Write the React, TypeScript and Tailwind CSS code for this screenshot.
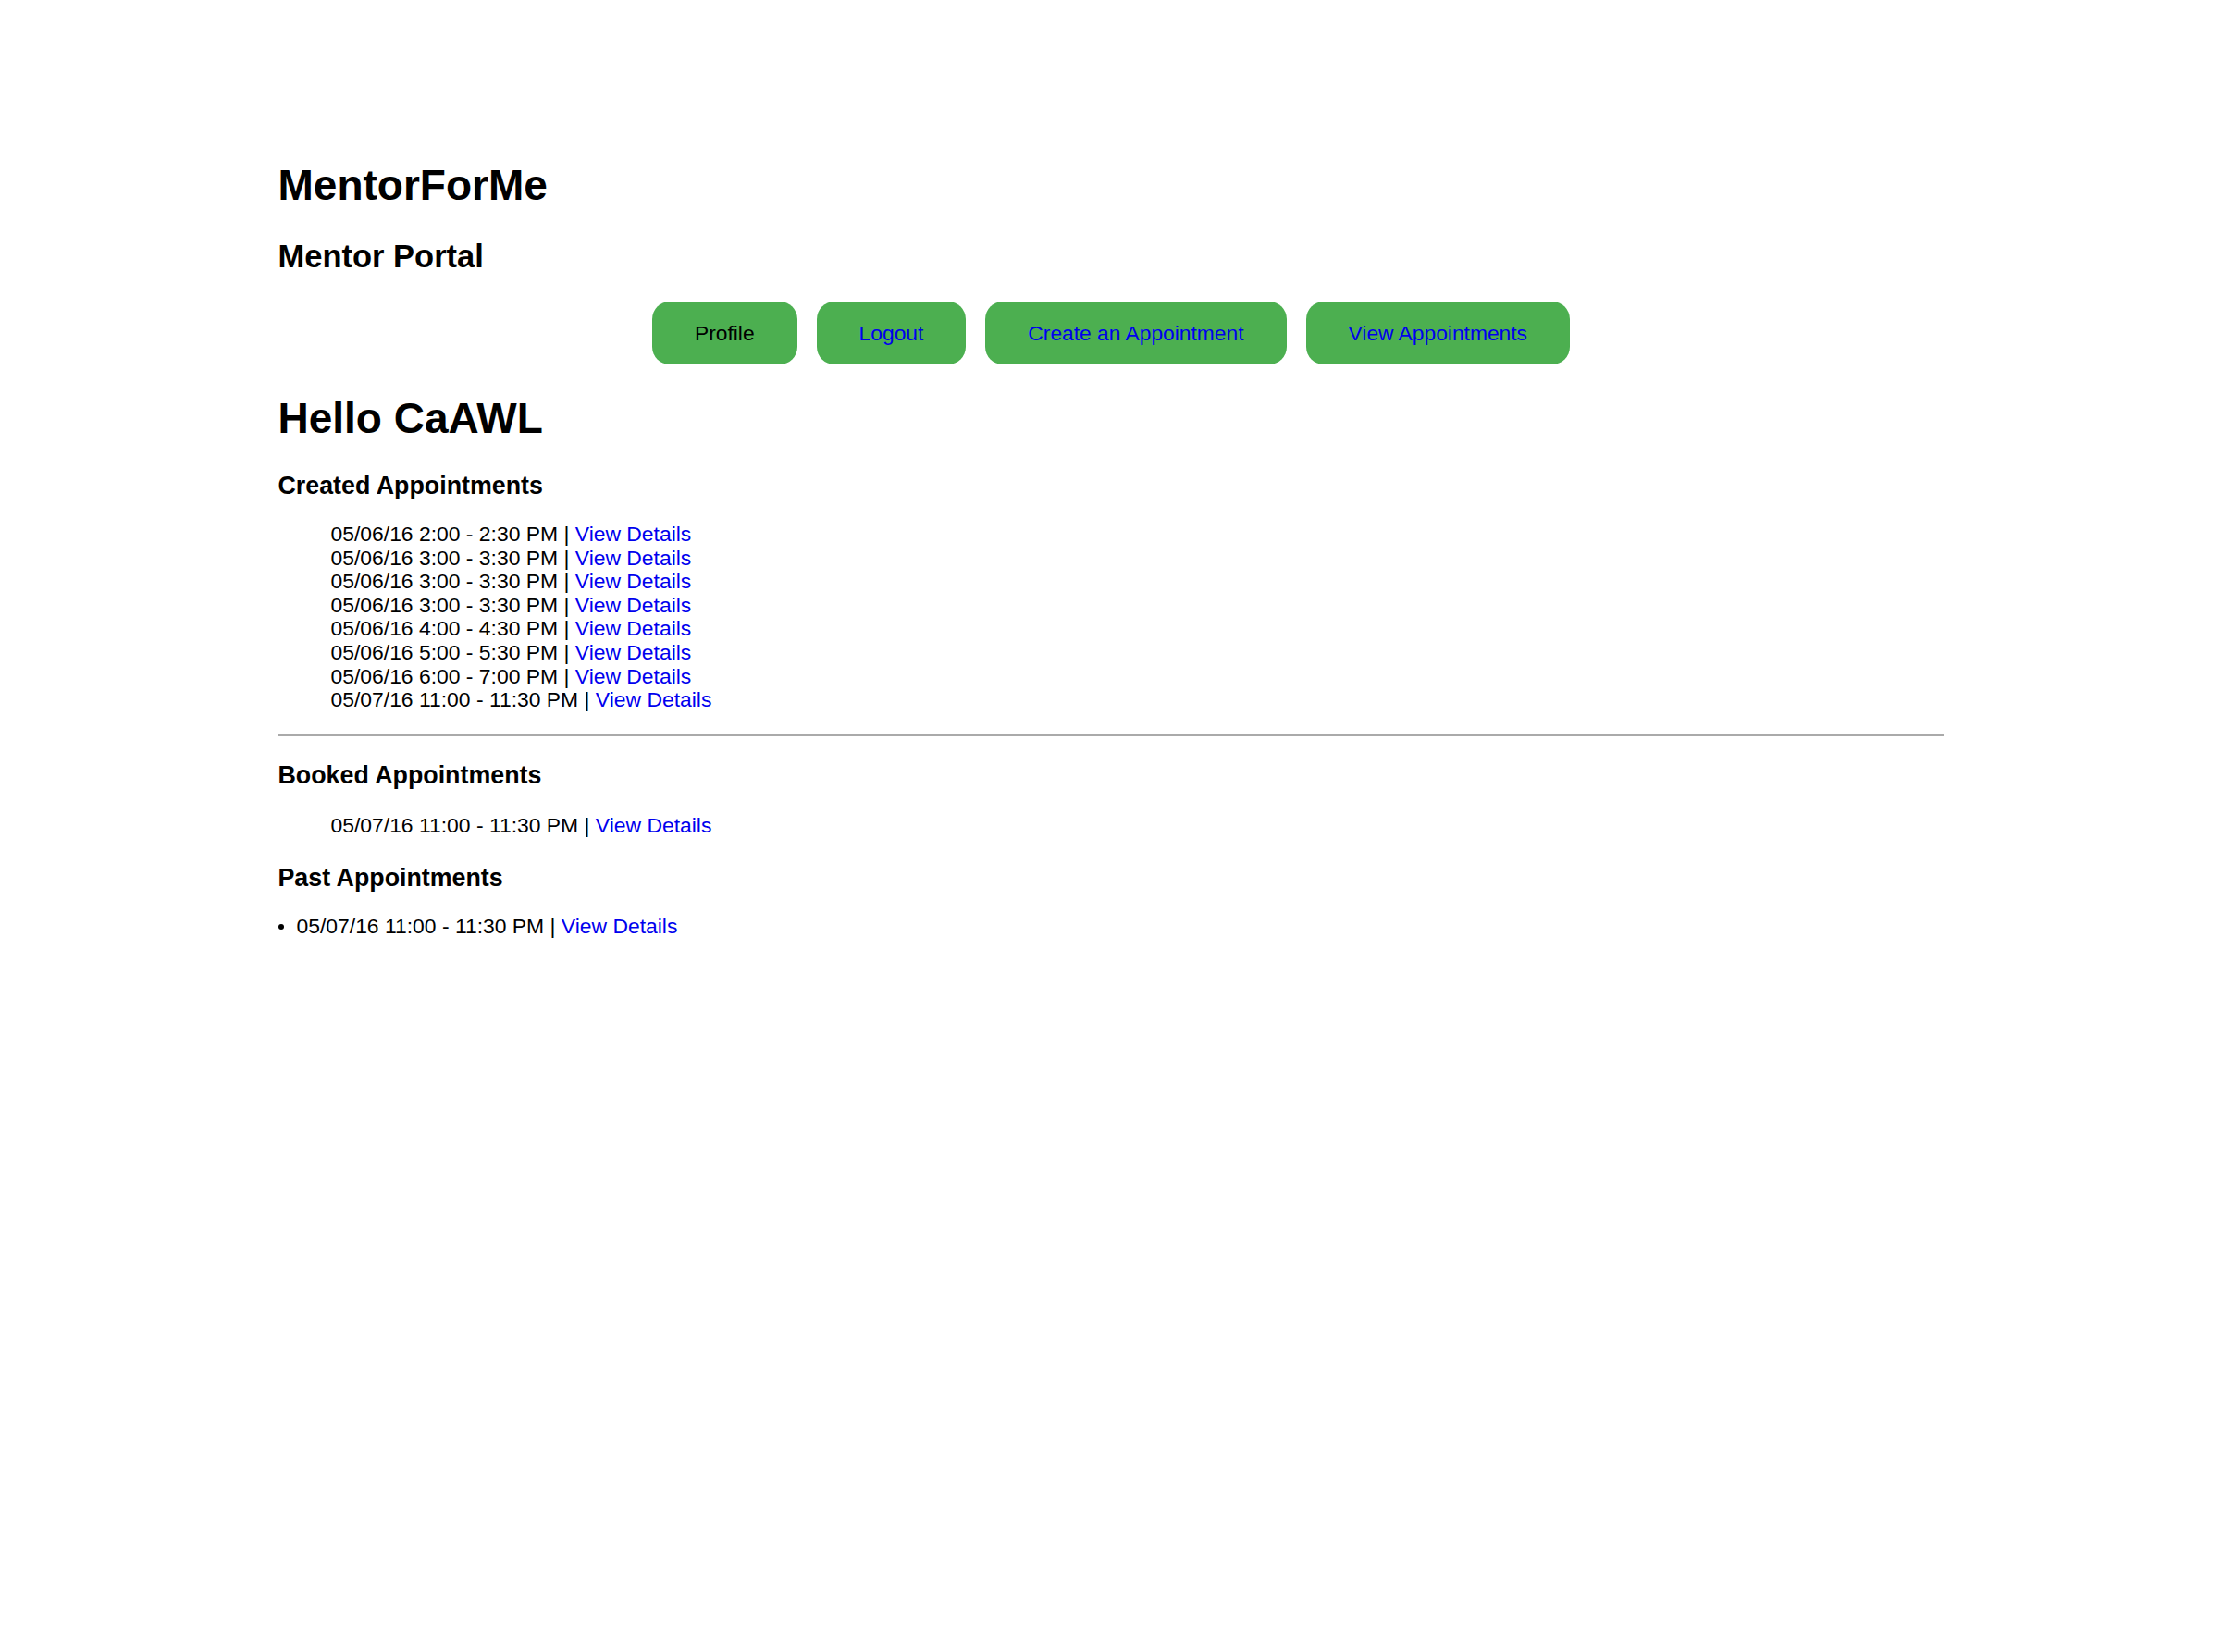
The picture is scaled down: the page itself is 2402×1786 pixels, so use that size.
import React from 'react';

const created = [
  '05/06/16 2:00 - 2:30 PM',
  '05/06/16 3:00 - 3:30 PM',
  '05/06/16 3:00 - 3:30 PM',
  '05/06/16 3:00 - 3:30 PM',
  '05/06/16 4:00 - 4:30 PM',
  '05/06/16 5:00 - 5:30 PM',
  '05/06/16 6:00 - 7:00 PM',
  '05/07/16 11:00 - 11:30 PM',
];

const AppointmentRow = ({ when }: { when: string }) => (
  <li>
    {when} | <a href="#" className="text-[#0000ee]">View Details</a>
  </li>
);

const NavButton = ({ label, link }: { label: string; link?: boolean }) => (
  <button
    type="button"
    className="h-[68px] px-[46px] rounded-[19px] bg-[#4caf50] flex items-center justify-center text-[22.8px] leading-[26px]"
  >
    {link ? <a href="#" className="text-[#0000ee]">{label}</a> : <span className="text-black">{label}</span>}
  </button>
);

export default function App() {
  return (
    <div className="min-h-screen bg-white text-black font-['Liberation_Sans',Arial,sans-serif]">
      <div className="mx-auto w-[1801px] pt-[174px] pb-20">
        <h1 className="text-[46px] leading-[53px] font-bold">MentorForMe</h1>
        <h2 className="mt-[30px] text-[34.5px] leading-[40px] font-bold">Mentor Portal</h2>

        <nav className="mt-[29px] flex justify-center gap-[21px]">
          <NavButton label="Profile" />
          <NavButton label="Logout" link />
          <NavButton label="Create an Appointment" link />
          <NavButton label="View Appointments" link />
        </nav>

        <h1 className="mt-[32px] text-[46px] leading-[53px] font-bold">Hello CaAWL</h1>

        <h3 className="mt-[30.5px] text-[26.8px] leading-[31px] font-bold">Created Appointments</h3>
        <ul className="mt-[24.5px] pl-[57px] text-[22.9px] leading-[25.6px]">
          {created.map((c, i) => (
            <AppointmentRow key={i} when={c} />
          ))}
        </ul>

        <hr className="mt-[24px] border-0 border-t-2 border-[#aaaaaa]" />

        <h3 className="mt-[27.5px] text-[26.8px] leading-[31px] font-bold">Booked Appointments</h3>
        <ul className="mt-[25.5px] pl-[57px] text-[22.9px] leading-[25.6px]">
          <AppointmentRow when="05/07/16 11:00 - 11:30 PM" />
        </ul>

        <h3 className="mt-[28.5px] text-[26.8px] leading-[31px] font-bold">Past Appointments</h3>
        <ul className="mt-[24px] text-[22.9px] leading-[25.6px]">
          <li className="flex items-center">
            <span className="w-[6px] h-[6px] rounded-full bg-black mr-[14px]" />
            <span>
              05/07/16 11:00 - 11:30 PM | <a href="#" className="text-[#0000ee]">View Details</a>
            </span>
          </li>
        </ul>
      </div>
    </div>
  );
}
